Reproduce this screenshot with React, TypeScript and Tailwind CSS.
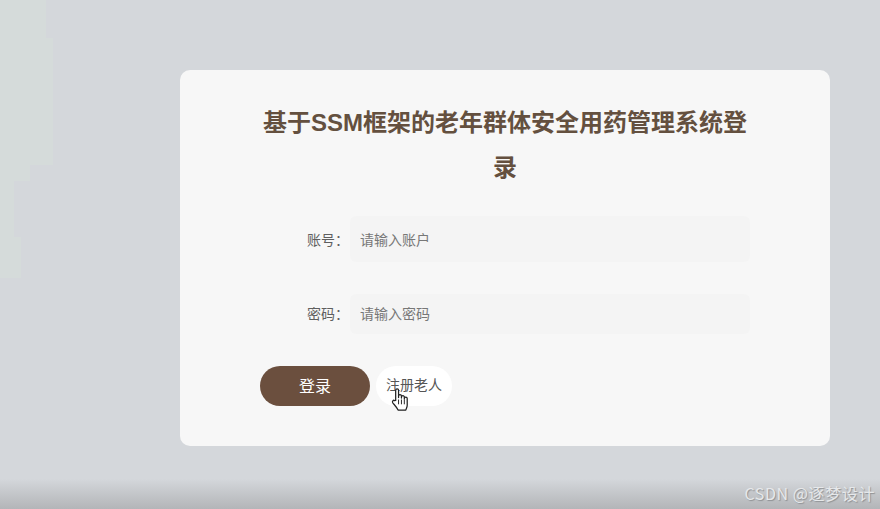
import React from "react";

const font = { fontFamily: '"Noto Sans CJK SC", "Open Sans", sans-serif' };
const titleFont = { fontFamily: '"Liberation Sans", "Noto Sans CJK SC", sans-serif' };

function Field({ label, placeholder, h, pad }: { label: string; placeholder: string; h: string; pad: string }) {
  return (
    <div className="flex items-center">
      <label className={`w-[90px] ${pad} pr-[1px] text-right text-[14px] text-[#5f5f5f]`}>{label}</label>
      <input
        readOnly
        placeholder={placeholder}
        className={`w-[400px] ${h} ${pad} rounded-[6px] bg-[#f4f4f4] pl-[10px] pr-[10px] text-[14px] outline-none placeholder:text-[#777777]`}
      />
    </div>
  );
}

export default function App() {
  return (
    <div style={font} className="relative h-[509px] w-full overflow-hidden bg-[#d4d7db]">
      <svg className="absolute left-0 top-0" width="60" height="280" aria-hidden="true">
        <polygon points="0,0 46,0 46,38 53,38 53,165 30,165 30,181 14,181 14,237 21,237 21,278 0,278" fill="#d5dbda" />
      </svg>
      <div className="absolute inset-x-0 bottom-0 h-[30px] bg-gradient-to-b from-[#d4d7db] to-[#b3b5b8]" />

      <div className="relative ml-[180px] mt-[70px] inline-block h-[376px] w-[650px] rounded-[10px] bg-[#f7f7f7] px-[80px] pt-[30px] align-top">
        <h1 style={titleFont} className="text-center text-[24px] font-bold leading-[45px] text-[#64503f]">
          基于SSM框架的老年群体安全用药管理系统登录
        </h1>
        <div className="mt-[26px] flex flex-col gap-[32px]">
          <Field label="账号：" placeholder="请输入账户" h="h-[46px]" pad="pb-0" />
          <Field label="密码：" placeholder="请输入密码" h="h-[40px]" pad="pb-[2px]" />
        </div>
        <div className="mt-[32px] flex items-center gap-[6px]">
          <button className="h-[40px] w-[110px] rounded-full bg-[#6b4f3e] pb-[3px] text-[16px] text-white">登录</button>
          <button className="relative h-[40px] w-[76px] rounded-full bg-white pb-[3px] text-[14px] text-[#555555]">
            注册老人
            <svg className="absolute left-[14px] top-[21px]" width="20" height="25" viewBox="0 0 19 26" aria-hidden="true">
              <path
                d="M5 14 V3.5 a1.5 1.5 0 0 1 3 0 V11 V9.5 a1.5 1.5 0 0 1 3 0 V11.5 V10.5 a1.5 1.5 0 0 1 3 0 V12.5 V12 a1.4 1.4 0 0 1 3 0 V19 c0 2 -1 3 -1.5 5 H7.5 C6.5 21.5 4.5 19.5 2 16.5 C1 15 2.5 13 4 14.2 Z"
                fill="#ffffff"
                stroke="#222222"
                strokeWidth="1.3"
                strokeLinejoin="round"
              />
              <path d="M8 13v5M11 13v5M14 13v5" stroke="#222222" strokeWidth="1" fill="none" />
            </svg>
          </button>
        </div>
      </div>

      <div className="absolute bottom-[6px] right-[5px] text-[16px] leading-[20px] tracking-[0.6px] text-[#e6e8ea] [text-shadow:1px_1px_1px_#8f9194]">
        CSDN @逐梦设计
      </div>
    </div>
  );
}
